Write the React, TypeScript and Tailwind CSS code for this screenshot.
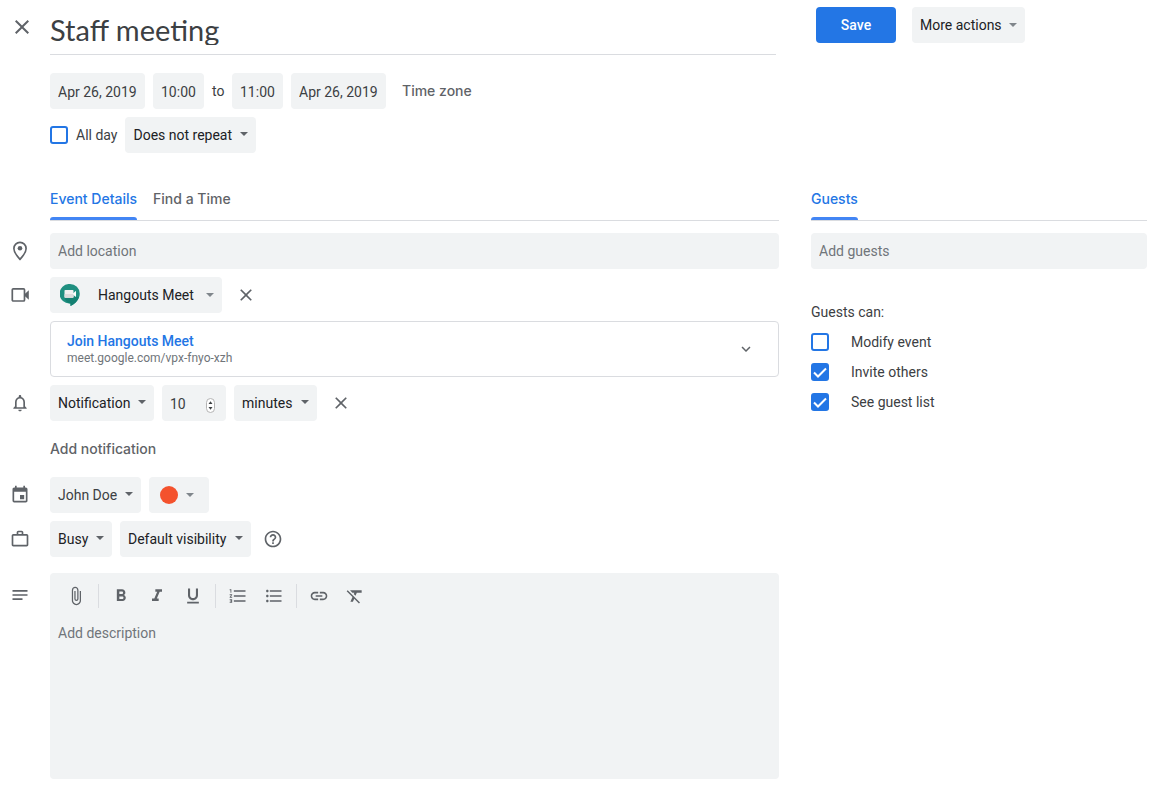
import { useState } from "react";
import type { InputHTMLAttributes, ReactNode } from "react";
import {
  MdAttachFile,
  MdClose,
  MdEvent,
  MdExpandMore,
  MdFormatBold,
  MdFormatClear,
  MdFormatItalic,
  MdFormatListBulleted,
  MdFormatListNumbered,
  MdFormatUnderlined,
  MdHelpOutline,
  MdInsertLink,
  MdNotes,
  MdNotificationsNone,
  MdWorkOutline,
} from "react-icons/md";

function Caret({ className = "" }: { className?: string }) {
  return (
    <svg
      aria-hidden="true"
      viewBox="0 0 8 4"
      className={"pointer-events-none h-1 w-2 shrink-0 " + className}
    >
      <path d="M0 0h8L4 4z" fill="currentColor" />
    </svg>
  );
}

function PlaceIcon() {
  return (
    <svg aria-hidden="true" viewBox="0 0 20 20" className="size-5">
      <path
        d="M10 1.300a6.100 6.100 0 0 0-6.100 6.100c0 4.300 6.100 10.900 6.100 10.900s6.100-6.600 6.100-10.900A6.100 6.100 0 0 0 10 1.300z"
        fill="none"
        stroke="currentColor"
        strokeWidth="1.700"
      />
      <circle cx="10" cy="7.300" r="2.300" fill="currentColor" />
    </svg>
  );
}

function VideoIcon() {
  return (
    <svg aria-hidden="true" viewBox="0 0 20 20" className="size-5">
      <rect
        x="2.300"
        y="3.800"
        width="12.200"
        height="12.200"
        rx="1"
        fill="none"
        stroke="currentColor"
        strokeWidth="1.700"
      />
      <path d="M14.500 9.200L18.800 5.300v9.400L14.500 10.800z" fill="currentColor" />
    </svg>
  );
}

function Dropdown({
  label,
  options,
  className,
}: {
  label: string;
  options: string[];
  className: string;
}) {
  return (
    <div className={"relative " + className}>
      <select
        aria-label={label}
        className="h-9 w-full cursor-pointer appearance-none rounded bg-[#f1f3f4] pr-5 pl-2 text-inherit outline-none"
      >
        {options.map((option) => (
          <option key={option}>{option}</option>
        ))}
      </select>
      <Caret className="absolute top-[15px] right-2 text-[#5f6368]" />
    </div>
  );
}

function Field({ className = "", ...props }: InputHTMLAttributes<HTMLInputElement>) {
  return (
    <input
      {...props}
      className={
        "h-9 rounded bg-[#f1f3f4] px-2 outline-none placeholder:text-[#70757a] " + className
      }
    />
  );
}

function Check({
  label,
  gap,
  initial = false,
}: {
  label: string;
  gap: string;
  initial?: boolean;
}) {
  const [checked, setChecked] = useState(initial);
  return (
    <label className={"flex cursor-pointer items-center " + gap}>
      <span className="relative flex size-[18px] shrink-0">
        <input
          type="checkbox"
          checked={checked}
          onChange={(e) => setChecked(e.target.checked)}
          className="size-full appearance-none rounded-[3px] border-2 border-[#2376e5] checked:bg-[#2376e5]"
        />
        {checked && (
          <svg
            aria-hidden="true"
            viewBox="0 0 18 18"
            className="pointer-events-none absolute inset-0"
          >
            <path d="M3 9.500l4 4L15 5.500" fill="none" stroke="#fff" strokeWidth="2" />
          </svg>
        )}
      </span>
      {label}
    </label>
  );
}

function Row({ icon, children }: { icon?: ReactNode; children: ReactNode }) {
  return (
    <div className="flex">
      <div className="flex h-9 w-[50px] shrink-0 items-center pl-[10px] text-xl text-[#5f6368]">
        {icon}
      </div>
      <div className="flex min-w-0 flex-1 items-center gap-2">{children}</div>
    </div>
  );
}

function IconButton({
  label,
  className,
  children,
}: {
  label: string;
  className: string;
  children: ReactNode;
}) {
  return (
    <button
      type="button"
      aria-label={label}
      className={"flex shrink-0 items-center justify-center text-[#5f6368] " + className}
    >
      {children}
    </button>
  );
}

function Tab({ active = false, children }: { active?: boolean; children: ReactNode }) {
  return (
    <button
      type="button"
      role="tab"
      aria-selected={active}
      className={
        "flex flex-col font-['Inter',sans-serif] font-medium " +
        (active ? "text-[#2376e5]" : "text-[#5f6368]")
      }
    >
      <span className="flex h-9 items-center">{children}</span>
      <span className={"h-[3px] w-full rounded-t-sm " + (active ? "bg-[#4285f4]" : "")} />
    </button>
  );
}

function MeetLogo() {
  return (
    <svg aria-hidden="true" viewBox="0 0 20 22" className="h-[22px] w-5">
      <path
        d="M10 0a9.750 9.750 0 0 1 9.750 9.750c0 5.300-4.200 9.800-9.250 12.250v-2.600A9.750 9.750 0 1 1 10 0z"
        fill="#1f8f80"
      />
      <path d="M4.500 13.700h8.500l3-1 3 .5c-1.500 4-4.500 6.800-8.500 8.800v-2.600c-3-.2-5-2.700-6-5.700z" fill="#148072" />
      <rect x="4.500" y="6" width="9" height="7.700" rx="0.800" fill="#f1f1f1" />
      <path d="M13 9.500L16 6.800v6.200L13 10.700z" fill="#fff" />
      <rect x="4.500" y="10" width="9" height="3.700" rx="0.800" fill="#dcdcdc" />
    </svg>
  );
}

function Separator() {
  return <span className="mx-1 h-6 w-px bg-[#dadce0]" />;
}

export default function App() {
  return (
    <main className="min-h-screen bg-white pt-[7px] pr-[22px] pb-5 font-['Roboto',sans-serif] text-sm text-[#3c4043]">
      <header className="flex items-start">
        <div className="w-[50px] shrink-0 pt-2 pl-[10px]">
          <IconButton label="Close" className="size-6 text-2xl">
            <MdClose />
          </IconButton>
        </div>
        <div className="mr-10 h-12 min-w-0 flex-1 border-b border-[#dadce0] pt-2">
          <input
            aria-label="Title"
            defaultValue="Staff meeting"
            className="block h-[30px] w-full font-['Lato','Roboto',sans-serif] text-[29px] leading-[30px] outline-none"
          />
        </div>
        <div className="flex w-[331px] shrink-0 gap-4">
          <button
            type="button"
            className="h-9 w-20 rounded bg-[#2376e5] font-medium text-white"
          >
            Save
          </button>
          <button
            type="button"
            aria-haspopup="menu"
            className="flex h-9 w-[113px] items-center justify-between rounded bg-[#f1f3f4] px-2 text-[#202124]"
          >
            More actions
            <Caret className="text-[#80868b]" />
          </button>
        </div>
      </header>

      <section aria-label="Date and time" className="mt-[18px] flex flex-col gap-2 pl-[50px]">
        <div className="flex items-center gap-2">
          <Field aria-label="Start date" defaultValue="Apr 26, 2019" className="w-[95px] pt-0.5" />
          <Field aria-label="Start time" defaultValue="10:00" className="w-[51px] pt-0.5" />
          <span className="w-3">to</span>
          <Field aria-label="End time" defaultValue="11:00" className="w-[51px] pt-0.5" />
          <Field aria-label="End date" defaultValue="Apr 26, 2019" className="w-[95px] pt-0.5" />
          <button
            type="button"
            className="px-2 font-['Inter',sans-serif] font-medium text-[#5f6368]"
          >
            Time zone
          </button>
        </div>
        <div className="flex items-center gap-2">
          <Check label="All day" gap="gap-2" />
          <Dropdown
            label="Repeat"
            options={["Does not repeat", "Daily", "Weekly", "Monthly"]}
            className="w-[131px] text-[#202124]"
          />
        </div>
      </section>

      <div className="mt-7 flex gap-8">
        <div className="min-w-0 flex-1">
          <div role="tablist" className="ml-[50px] flex gap-4 border-b border-[#dadce0]">
            <Tab active>Event Details</Tab>
            <Tab>Find a Time</Tab>
          </div>

          <div className="mt-3 flex flex-col gap-2">
            <Row icon={<PlaceIcon />}>
              <Field
                aria-label="Location"
                placeholder="Add location"
                className="min-w-0 flex-1"
              />
            </Row>

            <Row icon={<VideoIcon />}>
              <div className="relative flex w-[172px] items-center text-[#202124]">
                <select
                  aria-label="Conferencing"
                  className="h-9 w-full cursor-pointer appearance-none rounded bg-[#f1f3f4] pr-5 pl-12 outline-none"
                >
                  <option>Hangouts Meet</option>
                  <option>No conferencing</option>
                </select>
                <span className="pointer-events-none absolute left-[10px]">
                  <MeetLogo />
                </span>
                <Caret className="absolute right-2 text-[#80868b]" />
              </div>
              <IconButton label="Remove conferencing" className="size-8 text-xl">
                <MdClose />
              </IconButton>
            </Row>

            <Row>
              <div className="flex h-14 flex-1 items-center justify-between rounded border border-[#dadce0] pr-[22px] pl-4">
                <div className="pb-[3px]">
                  <a href="#meet" className="block leading-5 font-medium text-[#2376e5]">
                    Join Hangouts Meet
                  </a>
                  <p className="text-xs leading-[14px] text-[#70757a]">
                    meet.google.com/vpx-fnyo-xzh
                  </p>
                </div>
                <IconButton label="Show joining details" className="size-5 text-lg">
                  <MdExpandMore />
                </IconButton>
              </div>
            </Row>

            <Row icon={<MdNotificationsNone />}>
              <Dropdown
                label="Notification type"
                options={["Notification", "Email"]}
                className="w-[104px] text-[#202124]"
              />
              <div className="relative flex w-16 items-center">
                <Field
                  type="number"
                  aria-label="Notification time"
                  defaultValue={10}
                  className="w-full pt-0.5 [appearance:textfield] [&::-webkit-inner-spin-button]:appearance-none"
                />
                <svg
                  aria-hidden="true"
                  viewBox="0 0 9 15"
                  className="pointer-events-none absolute top-[13px] right-[11px] h-[15px] w-[9px]"
                >
                  <rect x="0.500" y="0.500" width="8" height="14" rx="4" fill="#fff" stroke="#b4b4b4" />
                  <path
                    d="M2.500 6l2-2.800L6.500 6zM2.500 9l2 2.800L6.500 9z"
                    fill="#3c4043"
                  />
                </svg>
              </div>
              <Dropdown
                label="Notification unit"
                options={["minutes", "hours", "days", "weeks"]}
                className="w-[83px] text-[#202124]"
              />
              <IconButton label="Remove notification" className="size-8 text-xl">
                <MdClose />
              </IconButton>
            </Row>

            <Row>
              <button
                type="button"
                className="my-0.5 h-9 font-['Inter',sans-serif] font-medium text-[#5f6368]"
              >
                Add notification
              </button>
            </Row>

            <Row icon={<MdEvent />}>
              <Dropdown label="Calendar" options={["John Doe"]} className="w-[91px]" />
              <button
                type="button"
                aria-label="Event color"
                aria-haspopup="menu"
                className="flex h-9 w-[60px] items-center gap-2 rounded bg-[#f1f3f4] pl-[11px]"
              >
                <span className="size-[18px] rounded-full bg-[#f4522d]" />
                <Caret className="text-[#80868b]" />
              </button>
            </Row>

            <Row icon={<MdWorkOutline />}>
              <Dropdown
                label="Availability"
                options={["Busy", "Free"]}
                className="w-[62px] text-[#202124]"
              />
              <Dropdown
                label="Visibility"
                options={["Default visibility", "Public", "Private"]}
                className="w-[131px] text-[#202124]"
              />
              <IconButton label="Help" className="ml-1 size-5 text-xl">
                <MdHelpOutline />
              </IconButton>
            </Row>

            <div className="mt-2 flex">
              <div className="flex h-11 w-[50px] shrink-0 items-center pl-[10px] text-xl text-[#5f6368]">
                <MdNotes />
              </div>
              <div className="min-w-0 flex-1 rounded bg-[#f1f3f4]">
                <div
                  role="toolbar"
                  aria-label="Formatting"
                  className="flex h-[46px] items-center pl-2 text-xl"
                >
                  <IconButton label="Attach file" className="h-8 w-9">
                    <MdAttachFile />
                  </IconButton>
                  <Separator />
                  <IconButton label="Bold" className="h-8 w-9">
                    <MdFormatBold />
                  </IconButton>
                  <IconButton label="Italic" className="h-8 w-9">
                    <MdFormatItalic />
                  </IconButton>
                  <IconButton label="Underline" className="h-8 w-9">
                    <MdFormatUnderlined />
                  </IconButton>
                  <Separator />
                  <IconButton label="Numbered list" className="h-8 w-9">
                    <MdFormatListNumbered />
                  </IconButton>
                  <IconButton label="Bulleted list" className="h-8 w-9">
                    <MdFormatListBulleted />
                  </IconButton>
                  <Separator />
                  <IconButton label="Insert link" className="h-8 w-9">
                    <MdInsertLink />
                  </IconButton>
                  <IconButton label="Remove formatting" className="h-8 w-9">
                    <MdFormatClear />
                  </IconButton>
                </div>
                <textarea
                  aria-label="Description"
                  placeholder="Add description"
                  className="block h-40 w-full resize-none px-2 pt-1 outline-none placeholder:text-[#70757a]"
                />
              </div>
            </div>
          </div>
        </div>

        <aside className="w-[336px] shrink-0">
          <div role="tablist" className="flex border-b border-[#dadce0]">
            <Tab active>Guests</Tab>
          </div>
          <Field aria-label="Guests" placeholder="Add guests" className="mt-3 w-full" />
          <fieldset className="mt-[33px]">
            <legend className="leading-5">Guests can:</legend>
            <div className="mt-[10px] flex flex-col gap-[10px]">
              <Check label="Modify event" gap="gap-[22px]" />
              <Check label="Invite others" gap="gap-[22px]" initial />
              <Check label="See guest list" gap="gap-[22px]" initial />
            </div>
          </fieldset>
        </aside>
      </div>
    </main>
  );
}
